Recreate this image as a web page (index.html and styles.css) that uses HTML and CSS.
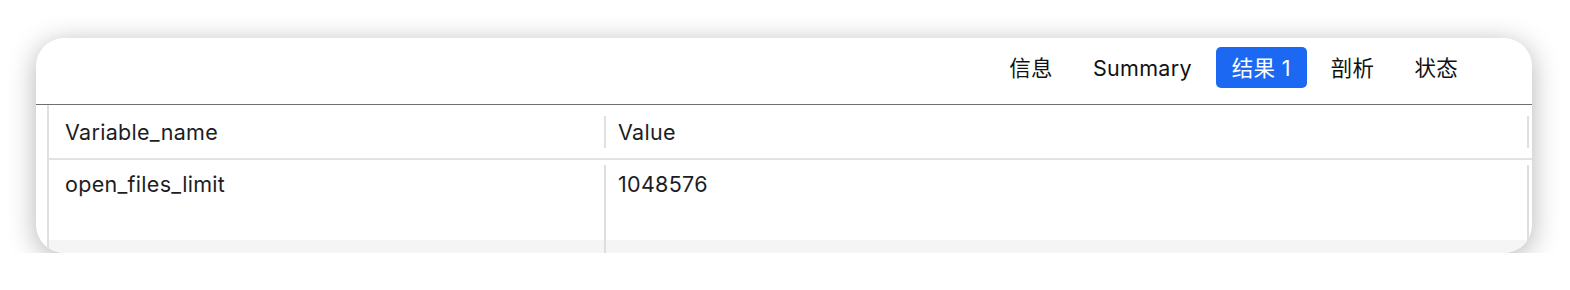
FILE: index.html
```html
<!DOCTYPE html>
<html lang="zh">
<head>
<meta charset="utf-8">
<link rel="stylesheet" href="styles.css">
</head>
<body>
<div class="card">
  <div class="tabs">
    <span class="tab">信息</span>
    <span class="tab">Summary</span>
    <span class="tab active">结果 1</span>
    <span class="tab">剖析</span>
    <span class="tab">状态</span>
  </div>
  <div class="table">
    <div class="thead">
      <div class="th col1">Variable_name</div>
      <div class="hsep"></div>
      <div class="th col2">Value</div>
      <div class="hsep"></div>
      <div class="gutter"></div>
    </div>
    <div class="tbody">
      <div class="col col1">
        <div class="td td1">open_files_limit</div>
        <div class="stripe"></div>
      </div>
      <div class="vsep"></div>
      <div class="col col2">
        <div class="td td2">1048576</div>
        <div class="stripe"></div>
      </div>
      <div class="vsep"></div>
      <div class="col gutter">
        <div class="td"></div>
        <div class="stripe"></div>
      </div>
    </div>
  </div>
</div>
</body>
</html>
```

FILE: styles.css
```css
* { box-sizing: border-box; }
html, body { margin: 0; padding: 0; background: #ffffff; }
body {
  font-family: "Inter", "Noto Sans CJK SC", sans-serif;
  color: #1d1d1f;
  padding: 38px 0 0 36px;
}
.card {
  width: 1496px;
  height: 215px;
  background: #ffffff;
  border-radius: 28px;
  box-shadow: 0 5px 28px rgba(0, 0, 0, 0.3);
  overflow: hidden;
  display: flex;
  flex-direction: column;
}
.tabs {
  height: 67px;
  flex: none;
  border-bottom: 1px solid #6f6f6f;
  display: flex;
  justify-content: flex-end;
  align-items: flex-start;
  gap: 8px;
  padding: 9px 58px 0 0;
}
.tab {
  height: 41px;
  padding: 0 16px;
  border-radius: 5px;
  font-size: 21.5px;
  letter-spacing: 0.3px;
  line-height: 42px;
  color: #111111;
  white-space: nowrap;
}
.tab.active {
  background: #1c68f3;
  color: #ffffff;
}
.table {
  flex: 1;
  margin-left: 11px;
  border-left: 2px solid #e0e0e0;
  display: flex;
  flex-direction: column;
}
.thead {
  height: 55px;
  flex: none;
  border-bottom: 2px solid #e2e2e2;
  display: flex;
  align-items: center;
}
.th {
  font-size: 21.5px;
  letter-spacing: 0.3px;
  line-height: 26px;
}
.col1 { width: 555px; flex: none; }
.col2 { flex: 1; }
.gutter { width: 3px; flex: none; }
.th.col1 { padding-left: 16px; }
.th.col2 { padding-left: 12px; }
.hsep {
  width: 2px;
  height: 32px;
  background: #e0e0e0;
  flex: none;
}
.tbody {
  flex: 1;
  display: flex;
}
.col {
  display: flex;
  flex-direction: column;
}
.td {
  height: 80px;
  flex: none;
  font-size: 21.5px;
  letter-spacing: 0.3px;
  line-height: 26px;
  padding-top: 11px;
}
.td1 { padding-left: 16px; }
.td2 { padding-left: 12px; }
.stripe {
  flex: 1;
  background: #f5f5f5;
}
.vsep {
  width: 2px;
  flex: none;
  margin-top: 5px;
  background: #dedede;
}
```
